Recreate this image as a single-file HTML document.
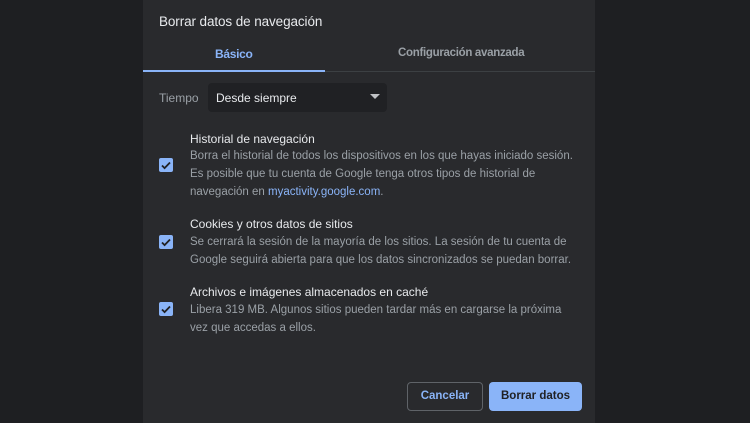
<!DOCTYPE html>
<html><head><style>
body{margin:0;width:750px;height:423px;background:#1e1f22;font-family:"Liberation Sans",sans-serif;position:relative;overflow:hidden}
.d{position:absolute;left:143px;top:0;width:452px;height:423px;background:#292a2d}
.a{position:absolute;white-space:nowrap}
.t{left:16px;top:14px;font-size:13.5px;color:#e8eaed;letter-spacing:-0.1px}
.tab{top:47px;font-size:12px;font-weight:bold;letter-spacing:-0.3px}
.cb{position:absolute;left:16px;width:14px;height:14px;background:#8ab4f8;border-radius:2px}
.h{font-size:12px;color:#e8eaed;left:47px}
.s{font-size:11.5px;color:#9aa0a6;left:47px;line-height:18px}
</style></head><body>
<div class="d">
<div class="a t">Borrar datos de navegación</div>
<div class="a tab" style="left:72px;color:#8ab4f8">Básico</div>
<div class="a tab" style="left:255px;color:#9aa0a6;font-size:11.5px">Configuración avanzada</div>
<div class="a" style="left:0;top:71px;width:452px;height:1px;background:#3c4043"></div>
<div class="a" style="left:0;top:70px;width:182px;height:2px;background:#8ab4f8"></div>
<div class="a" style="left:16px;top:91px;font-size:12px;color:#9aa0a6">Tiempo</div>
<div class="a" style="left:65px;top:83px;width:179px;height:29px;background:#202124;border-radius:4px"></div>
<div class="a" style="left:73px;top:91px;font-size:12px;color:#e8eaed">Desde siempre</div>
<div class="a" style="left:227px;top:94px;width:0;height:0;border-left:5px solid transparent;border-right:5px solid transparent;border-top:5px solid #c0c2c5"></div>

<div class="a h" style="top:132px">Historial de navegación</div>
<div class="cb" style="top:158px"><svg width="14" height="14"><path d="M3 7.5l2.6 2.6L11 4.5" stroke="#202124" stroke-width="1.8" fill="none"/></svg></div>
<div class="a s" style="top:147px">Borra el historial de todos los dispositivos en los que hayas iniciado sesión.<br>Es posible que tu cuenta de Google tenga otros tipos de historial de<br>navegación en <span style="color:#8ab4f8">myactivity.google.com</span>.</div>

<div class="a h" style="top:217px">Cookies y otros datos de sitios</div>
<div class="cb" style="top:235px"><svg width="14" height="14"><path d="M3 7.5l2.6 2.6L11 4.5" stroke="#202124" stroke-width="1.8" fill="none"/></svg></div>
<div class="a s" style="top:233px">Se cerrará la sesión de la mayoría de los sitios. La sesión de tu cuenta de<br>Google seguirá abierta para que los datos sincronizados se puedan borrar.</div>

<div class="a h" style="top:285px">Archivos e imágenes almacenados en caché</div>
<div class="cb" style="top:302px"><svg width="14" height="14"><path d="M3 7.5l2.6 2.6L11 4.5" stroke="#202124" stroke-width="1.8" fill="none"/></svg></div>
<div class="a s" style="top:301px">Libera 319 MB. Algunos sitios pueden tardar más en cargarse la próxima<br>vez que accedas a ellos.</div>

<div class="a" style="left:264px;top:382px;width:74px;height:27px;border:1px solid #5f6368;border-radius:4px;color:#8ab4f8;font-size:11.5px;font-weight:bold;text-align:center;line-height:27px">Cancelar</div>
<div class="a" style="left:346px;top:382px;width:93px;height:29px;background:#8ab4f8;border-radius:4px;color:#202124;font-size:11.5px;font-weight:bold;text-align:center;line-height:29px">Borrar datos</div>
</div>
</body></html>
